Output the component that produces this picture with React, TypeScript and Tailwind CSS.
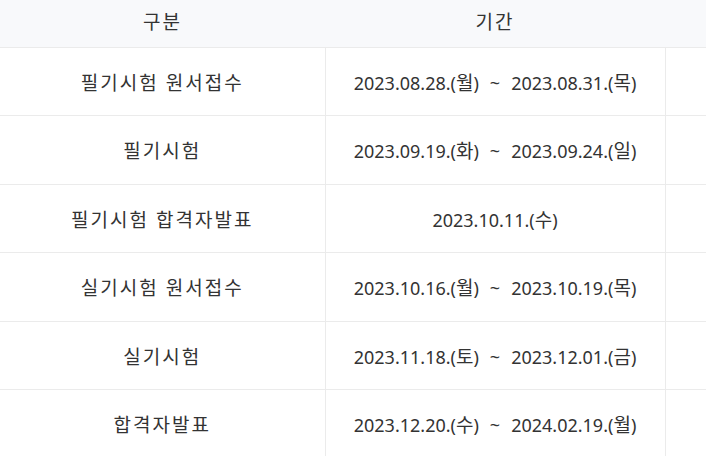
const rows: { label: string; from: string; to?: string }[] = [
  { label: '필기시험 원서접수', from: '2023.08.28.(월)', to: '2023.08.31.(목)' },
  { label: '필기시험', from: '2023.09.19.(화)', to: '2023.09.24.(일)' },
  { label: '필기시험 합격자발표', from: '2023.10.11.(수)' },
  { label: '실기시험 원서접수', from: '2023.10.16.(월)', to: '2023.10.19.(목)' },
  { label: '실기시험', from: '2023.11.18.(토)', to: '2023.12.01.(금)' },
  { label: '합격자발표', from: '2023.12.20.(수)', to: '2024.02.19.(월)' },
]

// "2023.08.28.(월)" -> date part + weekday shown a bit larger
function DateText({ value }: { value: string }) {
  const open = value.indexOf('(')
  return (
    <span>
      {value.slice(0, open + 1)}
      <span className="text-[19px]">{value.slice(open + 1, -1)}</span>
      {value.slice(-1)}
    </span>
  )
}

export default function App() {
  return (
    <div
      className="w-[706px] h-[456px] overflow-hidden bg-white text-[#333] text-[18px]"
      style={{ fontFamily: '"Noto Sans", "Noto Sans CJK KR", sans-serif' }}
    >
      <table className="w-[706px] border-collapse table-fixed">
        <colgroup>
          <col className="w-[325px]" />
          <col className="w-[340px]" />
          <col />
        </colgroup>
        <thead>
          <tr className="h-[47px] bg-[#f8f9fb] border-b border-[#ebebeb]">
            <th className="font-normal pb-[3px] text-[19px] tracking-[2px]">구분</th>
            <th className="font-normal pb-[3px] text-[19px] tracking-[2px]">기간</th>
            <th />
          </tr>
        </thead>
        <tbody>
          {rows.map((row) => (
            <tr key={row.label} className="h-[68.5px] border-b border-[#ebebeb]">
              <td className="text-center pt-[3px] border-r border-[#ebebeb] text-[19px] tracking-[2px]">
                {row.label}
              </td>
              <td className="text-center pt-[3px] border-r border-[#ebebeb] whitespace-nowrap">
                <DateText value={row.from} />
                {row.to && (
                  <>
                    <span className="px-[11px]">~</span>
                    <DateText value={row.to} />
                  </>
                )}
              </td>
              <td />
            </tr>
          ))}
        </tbody>
      </table>
    </div>
  )
}
